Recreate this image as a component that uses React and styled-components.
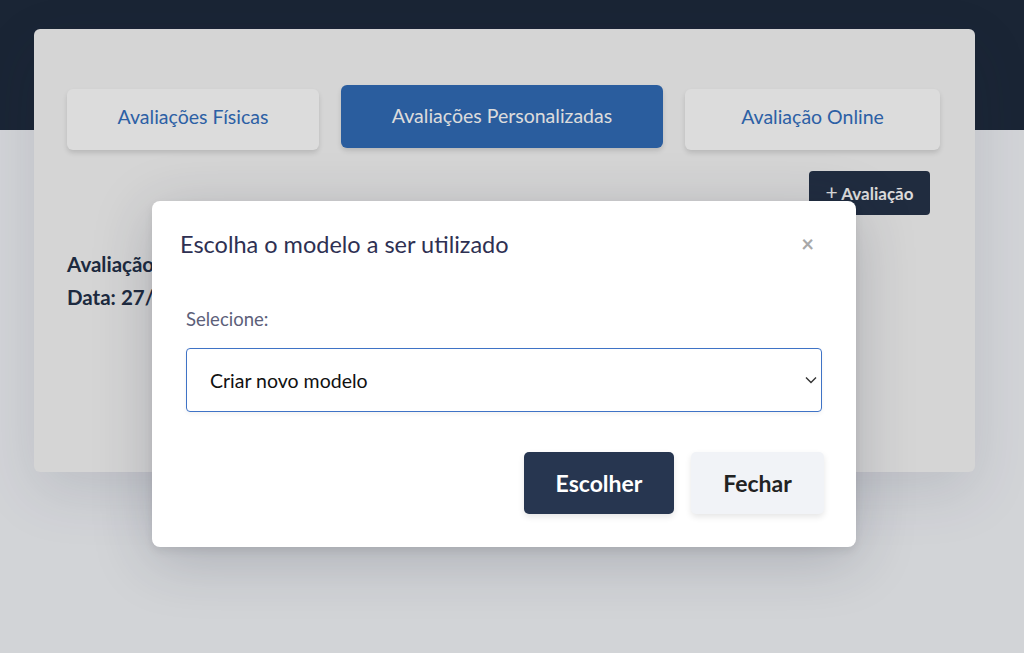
import styled, { createGlobalStyle } from "styled-components";

const GlobalStyle = createGlobalStyle`
  body {
    margin: 0;
    font-family: Lato, "Noto Sans", sans-serif;
  }
`;

const tabs = [
  { label: "Avaliações Físicas", active: false },
  { label: "Avaliações Personalizadas", active: true },
  { label: "Avaliação Online", active: false },
];

function App() {
  return (
    <Page>
      <GlobalStyle />
      <Card>
        <Tabs>
          {tabs.map((t) => (
            <Tab key={t.label} $active={t.active}>
              {t.label}
            </Tab>
          ))}
        </Tabs>
        <Actions>
          <AddButton>
            <Plus>+</Plus> Avaliação
          </AddButton>
        </Actions>
        <Info>
          <p>Avaliação Personalizada</p>
          <p>Data: 27/09/2023</p>
        </Info>
      </Card>

      <Backdrop>
        <Modal>
          <ModalHeader>
            <h2>Escolha o modelo a ser utilizado</h2>
            <Close>×</Close>
          </ModalHeader>
          <ModalBody>
            <Label>Selecione:</Label>
            <SelectBox>
              <span>Criar novo modelo</span>
              <svg width="12" height="8" viewBox="0 0 12 8" fill="none">
                <path d="M1 1.5l5 5 5-5" stroke="#333" strokeWidth="1.4" />
              </svg>
            </SelectBox>
          </ModalBody>
          <ModalFooter>
            <Button $primary>Escolher</Button>
            <Button>Fechar</Button>
          </ModalFooter>
        </Modal>
      </Backdrop>
    </Page>
  );
}

const Page = styled.div`
  position: relative;
  min-height: 653px;
  overflow: hidden;
  padding: 29px 49px 0 34px;
  box-sizing: border-box;
  background: linear-gradient(#1f2b3e 0 130px, #f4f6fa 130px);
`;

const Card = styled.div`
  background: #f7f7f7;
  border-radius: 6px;
  height: 443px;
  padding: 56px 34px 0 33px;
  box-sizing: border-box;
  box-shadow: 0 20px 60px rgba(40, 50, 70, 0.12);
`;

const Tabs = styled.div`
  display: grid;
  grid-template-columns: 252px 322px 255px;
  gap: 22px;
  align-items: start;
`;

const Tab = styled.div`
  height: ${(p) => (p.$active ? "63px" : "61px")};
  margin-top: ${(p) => (p.$active ? "0" : "4px")};
  padding-bottom: ${(p) => (p.$active ? "2px" : "6px")};
  box-sizing: border-box;
  display: flex;
  align-items: center;
  justify-content: center;
  border-radius: 6px;
  font-size: 19.5px;
  background: ${(p) => (p.$active ? "#316cb8" : "#ffffff")};
  color: ${(p) => (p.$active ? "#ffffff" : "#3470c0")};
  box-shadow: 0 3px 5px rgba(0, 0, 0, 0.13);
`;

const Actions = styled.div`
  display: flex;
  justify-content: flex-end;
  margin-top: 21px;
  padding-right: 11px;
`;

const AddButton = styled.button`
  height: 44px;
  width: 121px;
  border: none;
  border-radius: 4px;
  background: #263349;
  color: #fff;
  font-family: inherit;
  font-weight: 700;
  font-size: 17px;
  white-space: nowrap;
  padding: 0 0 3px;
`;

const Plus = styled.span`
  font-weight: 400;
  font-size: 21px;
`;

const Info = styled.div`
  margin-top: 39px;
  p {
    margin: 0 0 13px;
    font-size: 20.5px;
    line-height: 20px;
    font-weight: 700;
    color: #23314a;
  }
`;

const Backdrop = styled.div`
  position: absolute;
  inset: 0;
  background: rgba(0, 0, 0, 0.137);
  padding: 201px 0 0 152px;
`;

const Modal = styled.div`
  width: 704px;
  height: 346px;
  box-sizing: border-box;
  background: #fff;
  border-radius: 8px;
  box-shadow: 0 12px 60px rgba(30, 35, 60, 0.22), 0 4px 8px rgba(0, 0, 0, 0.08);
  display: flex;
  flex-direction: column;
`;

const ModalHeader = styled.div`
  display: flex;
  align-items: center;
  justify-content: space-between;
  padding: 32px 42px 0 28px;
  h2 {
    margin: 0;
    font-size: 23.5px;
    line-height: 22px;
    font-weight: 400;
    color: #2e3052;
  }
`;

const Close = styled.span`
  color: #a8a8a8;
  font-size: 22px;
  font-weight: 700;
  line-height: 22px;
`;

const ModalBody = styled.div`
  padding: 54px 34px 0 34px;
`;

const Label = styled.div`
  font-size: 18.5px;
  line-height: 20px;
  color: #5c6079;
  margin-bottom: 19px;
`;

const SelectBox = styled.div`
  height: 64px;
  box-sizing: border-box;
  border: 1px solid #3f73c6;
  border-radius: 4px;
  display: flex;
  align-items: center;
  justify-content: space-between;
  padding: 0 4px 0 23px;
  font-size: 19.5px;
  color: #111;
  box-shadow: 0 2px 4px rgba(0, 0, 0, 0.05);
`;

const ModalFooter = styled.div`
  display: flex;
  justify-content: flex-end;
  gap: 17px;
  padding: 40px 32px 0;
`;

const Button = styled.button`
  height: 62px;
  width: ${(p) => (p.$primary ? "150px" : "133px")};
  border: none;
  border-radius: 5px;
  font-family: inherit;
  font-size: 23px;
  font-weight: 700;
  background: ${(p) => (p.$primary ? "#273650" : "#f1f3f7")};
  color: ${(p) => (p.$primary ? "#fff" : "#222")};
  box-shadow: 0 3px 6px rgba(0, 0, 0, 0.1);
`;

export default App;
